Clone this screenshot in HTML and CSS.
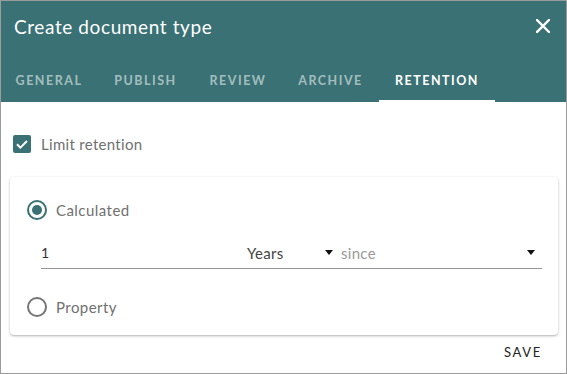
FILE: index.html
```html
<!DOCTYPE html>
<html lang="en">
<head>
<meta charset="utf-8">
<title>Create document type</title>
<link rel="stylesheet" href="styles.css">
</head>
<body>
<div class="dialog">
  <header class="header">
    <div class="title-row">
      <h1 class="title">Create document type</h1>
      <button class="close" aria-label="Close">
        <svg width="14" height="14" viewBox="0 0 14 14"><path d="M1 1 L13 13 M13 1 L1 13" stroke="#fff" stroke-width="2.4" stroke-linecap="square"/></svg>
      </button>
    </div>
    <nav class="tabs">
      <div class="tab tab-general">General</div>
      <div class="tab tab-publish">Publish</div>
      <div class="tab tab-review">Review</div>
      <div class="tab tab-archive">Archive</div>
      <div class="tab tab-retention active">Retention</div>
    </nav>
  </header>
  <main class="content">
    <label class="check-row">
      <span class="checkbox">
        <svg width="18" height="18" viewBox="0 0 18 18"><path d="M4 9.2 L7.4 12.6 L14 6" fill="none" stroke="#fff" stroke-width="2"/></svg>
      </span>
      <span class="check-label">Limit retention</span>
    </label>
    <section class="card">
      <div class="radio-row">
        <span class="radio checked"><span class="dot"></span></span>
        <span class="radio-label">Calculated</span>
      </div>
      <div class="input-row">
        <div class="num">1</div>
        <div class="select select-unit"><span class="sel-text">Years</span><span class="caret"></span></div>
        <div class="select select-since"><span class="sel-text placeholder">since</span><span class="caret"></span></div>
      </div>
      <div class="radio-row radio-row-2">
        <span class="radio"></span>
        <span class="radio-label">Property</span>
      </div>
    </section>
    <div class="actions">
      <button class="save">Save</button>
    </div>
  </main>
</div>
</body>
</html>
```
FILE: styles.css
```css
* { box-sizing: border-box; }
html, body { margin: 0; padding: 0; background: #fff; }
body { font-family: "Lato", "Open Sans", sans-serif; }

.dialog {
  width: 567px;
  height: 374px;
  border: 1px solid #9b9b9b;
  display: flex;
  flex-direction: column;
  overflow: hidden;
}

.header {
  background: #397174;
  height: 101px;
  display: flex;
  flex-direction: column;
}

.title-row {
  height: 53px;
  display: flex;
  align-items: flex-start;
  justify-content: space-between;
  padding: 0 16px 0 13px;
}

.title {
  margin: 14px 0 0 0;
  font-size: 19px;
  line-height: 24px;
  font-weight: 400;
  color: #fff;
  letter-spacing: 0.6px;
}

.close {
  margin-top: 18px;
  padding: 0;
  border: 0;
  background: none;
  width: 14px;
  height: 14px;
  display: block;
}
.close svg { display: block; }

.tabs {
  height: 48px;
  display: flex;
  align-items: stretch;
}

.tab {
  display: flex;
  align-items: center;
  justify-content: center;
  padding-top: 6px;
  font-size: 12.5px;
  font-weight: 700;
  letter-spacing: 1.5px;
  text-transform: uppercase;
  color: rgba(255, 255, 255, 0.55);
  border-bottom: 2px solid transparent;
}
.tab-general { width: 96px; }
.tab-publish { width: 97px; }
.tab-review { width: 88px; }
.tab-archive { width: 97px; }
.tab-retention { width: 116px; }
.tab.active {
  color: #fff;
  border-bottom-color: #fff;
}

.content {
  flex: 1;
  display: flex;
  flex-direction: column;
  padding: 0 8px 0 9px;
}

.check-row {
  display: flex;
  align-items: center;
  height: 18px;
  margin-top: 33px;
  padding-left: 3px;
}
.checkbox {
  width: 18px;
  height: 18px;
  border-radius: 2px;
  background: #397174;
  display: block;
}
.checkbox svg { display: block; }
.check-label {
  margin-left: 10px;
  font-size: 15px;
  color: #707070;
  letter-spacing: 0.3px;
}

.card {
  margin-top: 24px;
  height: 158px;
  background: #fff;
  border-radius: 4px;
  box-shadow: 0 1px 3px rgba(0,0,0,0.25), 0 1px 1px rgba(0,0,0,0.08);
  padding: 23px 16px 0 17px;
  display: flex;
  flex-direction: column;
}

.radio-row {
  display: flex;
  align-items: center;
  height: 20px;
}
.radio {
  width: 20px;
  height: 20px;
  border-radius: 50%;
  border: 2px solid #757575;
  display: flex;
  align-items: center;
  justify-content: center;
}
.radio.checked { border-color: #397174; }
.dot {
  width: 10px;
  height: 10px;
  border-radius: 50%;
  background: #397174;
}
.radio-label {
  margin-left: 9px;
  font-size: 15px;
  color: #707070;
  letter-spacing: 0.45px;
}

.input-row {
  margin-top: 17px;
  margin-left: 14px;
  height: 32px;
  border-bottom: 1px solid #949494;
  display: grid;
  grid-template-columns: 206px 94px 1fr;
  align-items: center;
}
.num {
  font-size: 14px;
  color: #333;
}
.select {
  display: flex;
  align-items: center;
  justify-content: space-between;
}
.select-unit { padding-right: 8px; }
.select-since { padding-right: 7px; }
.sel-text {
  font-size: 15px;
  color: #444;
  letter-spacing: 0.3px;
}
.sel-text.placeholder { color: #9a9a9a; }
.caret {
  width: 0;
  height: 0;
  border-left: 4px solid transparent;
  border-right: 4px solid transparent;
  border-top: 5px solid #111;
}

.radio-row-2 { margin-top: 28px; }

.actions {
  flex: 1;
  display: flex;
  justify-content: flex-end;
  align-items: center;
  padding-right: 16px;
  padding-bottom: 4px;
}
.save {
  border: 0;
  background: none;
  padding: 0;
  font-family: inherit;
  font-size: 13px;
  font-weight: 400;
  letter-spacing: 1.7px;
  text-transform: uppercase;
  color: #222;
}
```
